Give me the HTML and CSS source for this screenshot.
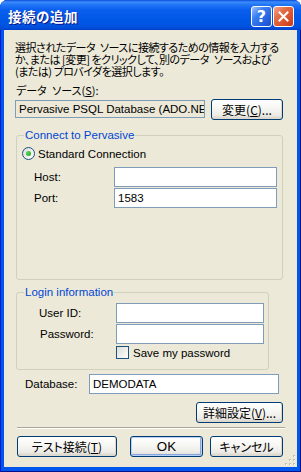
FILE: index.html
```html
<!DOCTYPE html>
<html lang="ja">
<head>
    <meta charset="UTF-8">
    <meta name="viewport" content="width=device-width, initial-scale=1.0">
    <title>接続の追加</title>
    <link rel="stylesheet" href="styles.css">
</head>
<body>
    <div class="window">
        <div class="titlebar">
            <span class="title">接続の追加</span>
            <button class="cap-btn help-btn">?</button>
            <button class="cap-btn close-btn">
                <svg width="11" height="11" viewBox="0 0 11 11">
                    <path d="M1.5 1.5 L9.5 9.5 M9.5 1.5 L1.5 9.5" stroke="#ffffff" stroke-width="2" stroke-linecap="square"/>
                </svg>
            </button>
        </div>

        <div class="content">
            <p class="intro jp">選択されたデータ&ensp;ソースに接続するための情報を入力する<br>か、または [変更] をクリックして、別のデータ&ensp;ソースおよび<br>(または) プロバイダを選択します。</p>

            <div class="source-label jp">データ&ensp;ソース(<u>S</u>):</div>
            <div class="source-row">
                <div class="textbox readonly">Pervasive PSQL Database (ADO.NE</div>
                <button class="btn change-btn jp">変更(<u>C</u>)...</button>
            </div>

            <fieldset class="group connect-group">
                <legend>Connect to Pervasive</legend>
                <div class="radio-row">
                    <span class="radio"><span class="radio-dot"></span></span>
                    <span>Standard Connection</span>
                </div>
                <div class="field-row host-row">
                    <span class="field-label">Host:</span>
                    <span class="textbox wide"></span>
                </div>
                <div class="field-row port-row">
                    <span class="field-label">Port:</span>
                    <span class="textbox wide">1583</span>
                </div>
            </fieldset>

            <fieldset class="group login-group">
                <legend>Login information</legend>
                <div class="field-row user-row">
                    <span class="field-label">User ID:</span>
                    <span class="textbox narrow"></span>
                </div>
                <div class="field-row pass-row">
                    <span class="field-label">Password:</span>
                    <span class="textbox narrow"></span>
                </div>
                <div class="check-row">
                    <span class="checkbox"></span>
                    <span>Save my password</span>
                </div>
            </fieldset>

            <div class="db-row">
                <span class="db-label">Database:</span>
                <span class="textbox db-box">DEMODATA</span>
            </div>

            <div class="advanced-row">
                <button class="btn advanced-btn jp">詳細設定(<u>V</u>)...</button>
            </div>

            <div class="separator"></div>

            <div class="footer">
                <button class="btn test-btn jp">テスト接続(<u>T</u>)</button>
                <button class="btn ok-btn">OK</button>
                <button class="btn cancel-btn jp">キャンセル</button>
            </div>

            <div class="grip">
                <svg width="11" height="11" viewBox="0 0 11 11">
                    <rect x="8" y="0" width="2" height="2" fill="#c1beb3"/>
                    <rect x="4" y="4" width="2" height="2" fill="#c1beb3"/>
                    <rect x="8" y="4" width="2" height="2" fill="#c1beb3"/>
                    <rect x="0" y="8" width="2" height="2" fill="#c1beb3"/>
                    <rect x="4" y="8" width="2" height="2" fill="#c1beb3"/>
                    <rect x="8" y="8" width="2" height="2" fill="#c1beb3"/>
                    <rect x="9" y="1" width="1" height="1" fill="#ffffff"/>
                    <rect x="5" y="5" width="1" height="1" fill="#ffffff"/>
                    <rect x="9" y="5" width="1" height="1" fill="#ffffff"/>
                    <rect x="1" y="9" width="1" height="1" fill="#ffffff"/>
                    <rect x="5" y="9" width="1" height="1" fill="#ffffff"/>
                    <rect x="9" y="9" width="1" height="1" fill="#ffffff"/>
                </svg>
            </div>
        </div>
    </div>
</body>
</html>
```

FILE: styles.css
```css
* {
    box-sizing: border-box;
}
html, body {
    margin: 0;
    padding: 0;
    background: #ffffff;
}
body {
    font-family: "Liberation Sans", "Noto Sans CJK JP", sans-serif;
    font-size: 11.5px;
    color: #000000;
}
.jp {
    font-family: "Noto Sans CJK JP", sans-serif;
    font-size: 12px;
    font-feature-settings: "palt";
}
u {
    text-underline-offset: 1px;
}

/* window frame */
.window {
    width: 301px;
    height: 472px;
    display: flex;
    flex-direction: column;
    padding: 0 4px 5px 4px;
    background: #0055ea;
    border-radius: 8px 8px 0 0;
    box-shadow: inset 1px 0 #0019cf, inset -1px 0 #00138c, inset 0 -1px #00138c;
}
.titlebar {
    height: 30px;
    margin: 0 -4px;
    padding: 6px 7px 0 8px;
    display: flex;
    align-items: flex-start;
    border-radius: 7px 7px 0 0;
    background: linear-gradient(to bottom, #0a4bd8 0, #3d8dfc 2px, #1f74f5 5px, #0a5eee 10px, #0057e6 20px, #0053e1 26px, #0048d2 29px, #003bc2 30px);
}
.title {
    flex: 1;
    color: #ffffff;
    font-family: "Noto Sans CJK JP", sans-serif;
    font-weight: bold;
    font-size: 13.5px;
    letter-spacing: 0.5px;
    line-height: 21px;
    text-shadow: 1px 1px #0a1883;
}
.cap-btn {
    width: 21px;
    height: 21px;
    padding: 0;
    margin-left: 1px;
    border: 1px solid #ffffff;
    border-radius: 3px;
    display: flex;
    align-items: center;
    justify-content: center;
}
.help-btn {
    background: linear-gradient(135deg, #9dc0ff 0%, #3c7ef0 35%, #2463df 70%, #1a4fd0 100%);
    color: #ffffff;
    font-family: "DejaVu Sans", sans-serif;
    font-weight: bold;
    font-size: 16px;
    line-height: 19px;
}
.close-btn {
    background: linear-gradient(135deg, #f3a58c 0%, #e46c44 35%, #d9502a 70%, #c53b15 100%);
}

/* dialog body */
.content {
    flex: 1;
    display: flex;
    flex-direction: column;
    padding: 11px 14px 0 12px;
    background: #ece9d8;
}
.intro {
    margin: 0 0 0 -1px;
    font-size: 11px;
    letter-spacing: -0.5px;
    line-height: 12px;
    white-space: nowrap;
}
.source-label {
    margin-top: 7px;
    font-size: 11px;
    line-height: 12px;
}
.source-row {
    margin-top: 3px;
    display: flex;
    align-items: flex-start;
}
.textbox {
    display: block;
    height: 20px;
    padding: 0 3px;
    border: 1px solid #7f9db9;
    background: #ffffff;
    line-height: 18px;
    white-space: nowrap;
    overflow: hidden;
}
.readonly {
    width: 190px;
    height: 18px;
    line-height: 16px;
    margin: 1px 0 0 -1px;
    background: #ece9d8;
}
.btn {
    height: 21px;
    padding: 0;
    border: 1px solid #003c74;
    border-radius: 3px;
    background: linear-gradient(to bottom, #ffffff 0%, #f7f7f4 40%, #ecebe6 80%, #d6d0c5 100%);
    color: #000000;
    line-height: 19px;
    box-shadow: inset -1px -1px #dcd8cc;
}
.change-btn {
    width: 72px;
    margin-left: auto;
}

/* group boxes */
.group {
    margin: 9px 0 0 0;
    padding: 0 0 0 5px;
    border: 1px solid #d0d0bf;
    border-radius: 3px;
    min-width: 0;
}
.group legend {
    margin-left: 2px;
    padding: 0 1px;
    color: #0046d5;
    line-height: 12px;
}
.connect-group {
    width: 267px;
    height: 151px;
}
.login-group {
    margin-top: 6px;
    width: 253px;
    height: 84px;
}
.radio-row {
    margin-top: 6px;
    height: 13px;
    display: flex;
    align-items: center;
    gap: 3px;
}
.radio {
    width: 13px;
    height: 13px;
    border: 1px solid #1c5180;
    border-radius: 50%;
    background: linear-gradient(135deg, #dcdcd7 0%, #ffffff 100%);
    display: flex;
    align-items: center;
    justify-content: center;
}
.radio-dot {
    width: 5px;
    height: 5px;
    border-radius: 50%;
    background: radial-gradient(circle at 35% 35%, #55d551 0%, #21a121 100%);
}
.field-row {
    display: flex;
    align-items: center;
}
.field-label {
    margin-left: 12px;
}
.host-row {
    margin-top: 7px;
}
.port-row {
    margin-top: 1px;
}
.wide {
    width: 163px;
    margin-left: auto;
    margin-right: 5px;
}
.user-row {
    margin-top: 5px;
}
.user-row .field-label {
    margin-left: 17px;
}
.pass-row {
    margin-top: 1px;
}
.pass-row .field-label {
    margin-left: 18px;
}
.narrow {
    width: 148px;
    margin-left: auto;
    margin-right: 4px;
}
.check-row {
    margin: 2px 0 0 94px;
    height: 13px;
    display: flex;
    align-items: center;
    gap: 4px;
}
.checkbox {
    width: 13px;
    height: 13px;
    border: 1px solid #1c5180;
    background: linear-gradient(135deg, #dcdcd7 0%, #ffffff 100%);
}

/* bottom part */
.db-row {
    margin-top: 4px;
    display: flex;
    align-items: center;
}
.db-label {
    margin-left: 9px;
}
.db-box {
    width: 190px;
    margin-left: auto;
    margin-right: 4px;
}
.advanced-row {
    margin-top: 8px;
    display: flex;
    justify-content: flex-end;
}
.advanced-btn {
    width: 87px;
}
.separator {
    margin: 4px -2px 0 1px;
    height: 2px;
    border-top: 1px solid #aca899;
    border-bottom: 1px solid #ffffff;
}
.footer {
    margin-top: 7px;
    display: flex;
}
.test-btn {
    width: 100px;
    margin-left: 1px;
}
.ok-btn {
    width: 73px;
    margin-left: 13px;
    box-shadow: inset 0 0 0 1px #b8cff5, inset -1px -1px 0 1px #8aa6e0;
}
.cancel-btn {
    width: 73px;
    margin-left: auto;
}
.grip {
    align-self: flex-end;
    margin: -2px -13px 0 0;
    width: 11px;
    height: 11px;
}
.grip svg {
    display: block;
}
```
